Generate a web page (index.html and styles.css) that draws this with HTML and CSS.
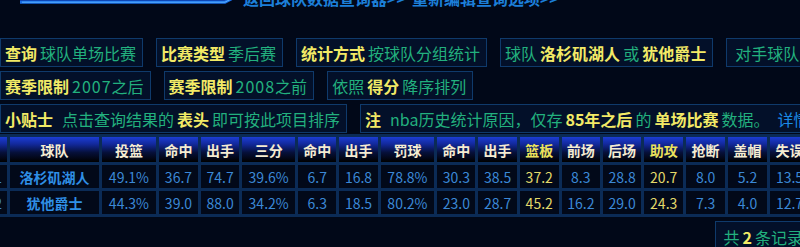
FILE: index.html
```html
<!DOCTYPE html>
<html lang="zh-CN">
<head>
<meta charset="utf-8">
<title>球队数据查询器</title>
<link rel="stylesheet" href="styles.css">
</head>
<body>
<div class="page">
  <header class="top">
    <svg class="tab" width="240" height="8" viewBox="0 0 240 8">
      <polygon points="20,0 232,0 226,2 20,2" fill="#0b3aa0"/>
      <polyline points="20,2.2 225,2.2 233,-2" fill="none" stroke="#1a6ee8" stroke-width="3"/>
      <polyline points="22,2.2 225,2.2 232,-1.5" fill="none" stroke="#5ab4ff" stroke-width="1"/>
    </svg>
    <nav class="links">
      <a class="link">返回球队数据查询器&gt;&gt;</a>
      <a class="link">重新编辑查询选项&gt;&gt;</a>
    </nav>
  </header>

  <section class="filters">
    <div class="frow">
      <div class="box"><b class="lab">查询</b><span class="val">球队单场比赛</span></div>
      <div class="box"><b class="lab">比赛类型</b><span class="val">季后赛</span></div>
      <div class="box"><b class="lab">统计方式</b><span class="val">按球队分组统计</span></div>
      <div class="box"><span class="val">球队</span><b class="lab">洛杉矶湖人</b><span class="val">或</span><b class="lab">犹他爵士</b></div>
      <div class="box wide"><span class="val">对手球队</span><b class="lab">不限</b></div>
    </div>
    <div class="frow">
      <div class="box"><b class="lab">赛季限制</b><span class="val"><span class="num">2007</span>之后</span></div>
      <div class="box"><b class="lab">赛季限制</b><span class="val"><span class="num">2008</span>之前</span></div>
      <div class="box"><span class="val">依照</span><b class="lab">得分</b><span class="val">降序排列</span></div>
    </div>
    <div class="frow">
      <div class="box"><b class="lab tip">小贴士</b><span class="val">点击查询结果的</span><b class="lab">表头</b><span class="val">即可按此项目排序</span></div>
      <div class="box"><b class="lab tip">注</b><span class="val">nba历史统计原因，仅存</span><b class="lab">85年之后</b><span class="val">的</span><b class="lab">单场比赛</b><span class="val">数据。</span><a class="more">详情</a></div>
    </div>
  </section>

  <div class="table-wrap">
    <table class="stats">
      <thead>
        <tr>
          <th class="w-rank"></th>
          <th class="w-team">球队</th>
          <th class="w-pct">投篮</th>
          <th class="w-45">命中</th>
          <th class="w-44">出手</th>
          <th class="w-60">三分</th>
          <th class="w-44">命中</th>
          <th class="w-44">出手</th>
          <th class="w-61">罚球</th>
          <th class="w-44">命中</th>
          <th class="w-44">出手</th>
          <th class="w-45 hl">篮板</th>
          <th class="w-44">前场</th>
          <th class="w-44">后场</th>
          <th class="w-45 hl">助攻</th>
          <th class="w-45">抢断</th>
          <th class="w-45">盖帽</th>
          <th class="w-45">失误</th>
        </tr>
      </thead>
      <tbody>
        <tr>
          <td>1</td><td class="team">洛杉矶湖人</td><td>49.1%</td><td>36.7</td><td>74.7</td><td>39.6%</td><td>6.7</td><td>16.8</td><td>78.8%</td><td>30.3</td><td>38.5</td><td class="hl">37.2</td><td>8.3</td><td>28.8</td><td class="hl">20.7</td><td>8.0</td><td>5.2</td><td>13.5</td>
        </tr>
        <tr>
          <td>2</td><td class="team">犹他爵士</td><td>44.3%</td><td>39.0</td><td>88.0</td><td>34.2%</td><td>6.3</td><td>18.5</td><td>80.2%</td><td>23.0</td><td>28.7</td><td class="hl">45.2</td><td>16.2</td><td>29.0</td><td class="hl">24.3</td><td>7.3</td><td>4.0</td><td>12.7</td>
        </tr>
      </tbody>
    </table>
  </div>

  <div class="foot">
    <div class="count"><span class="val">共</span><b class="lab">2</b><span class="val">条记录</span></div>
  </div>
</div>
</body>
</html>
```

FILE: styles.css
```css
html, body {
  margin: 0;
  padding: 0;
  background: #010818;
  overflow: hidden;
}

body {
  font-family: "Noto Sans CJK SC", "Noto Sans", sans-serif;
  font-size: 16px;
  color: #22b07e;
}

.page {
  width: 812px;
}

.top {
  height: 38px;
  display: flex;
  align-items: flex-start;
}

.tab {
  display: block;
  flex-shrink: 0;
  overflow: visible;
}

.links {
  display: flex;
  gap: 6px;
  margin-left: 3px;
  margin-top: -10px;
  line-height: 16px;
  white-space: nowrap;
}

.link {
  color: #1c7fd8;
  font-weight: bold;
  font-size: 16px;
}

.filters {
  display: flex;
  flex-direction: column;
  gap: 4px;
}

.frow {
  display: flex;
  gap: 13px;
}

.box {
  flex-shrink: 0;
  height: 29px;
  box-sizing: border-box;
  display: flex;
  align-items: center;
  gap: 3px;
  padding: 0 6px 0 4px;
  border: 1px solid #0f3a6b;
  background: #031029;
  white-space: nowrap;
  line-height: 1;
}

.box.wide {
  padding-left: 8px;
}

.lab {
  color: #f2ea66;
  font-weight: bold;
}

.lab.tip {
  margin-right: 6px;
}

.val {
  color: #22b07e;
}

.num {
  letter-spacing: 1px;
}

.more {
  color: #1a8ae6;
  margin-left: 5px;
}

.table-wrap {
  margin-top: 1px;
  margin-left: -14px;
}

.stats {
  border-collapse: separate;
  border-spacing: 3px;
  background: #0b2b56;
  font-size: 14px;
  white-space: nowrap;
}

.stats th,
.stats td {
  padding: 0;
  text-align: center;
}

.stats th {
  height: 25px;
  font-weight: bold;
  color: #f5ecd2;
  background: linear-gradient(to bottom, #1c3dd4 0%, #12299c 28%, #06103a 62%, #000 100%);
}

.stats th.hl {
  color: #ece25c;
}

.stats td {
  height: 23px;
  color: #3b88d6;
  background: #020919;
}

.stats td.team {
  color: #2f8fe6;
  font-weight: bold;
}

.stats td.hl {
  color: #e3d96a;
}

.w-rank { width: 24px; }
.w-team { width: 99px; }
.w-pct { width: 62px; }
.w-60 { width: 60px; }
.w-61 { width: 61px; }
.w-44 { width: 44px; }
.w-45 { width: 45px; }

.foot {
  display: flex;
  justify-content: flex-end;
  margin-top: 4px;
}

.count {
  height: 32px;
  box-sizing: border-box;
  display: flex;
  align-items: center;
  gap: 3px;
  padding: 0 8px;
  border: 1px solid #0f3a6b;
  background: #031029;
  white-space: nowrap;
}
```
